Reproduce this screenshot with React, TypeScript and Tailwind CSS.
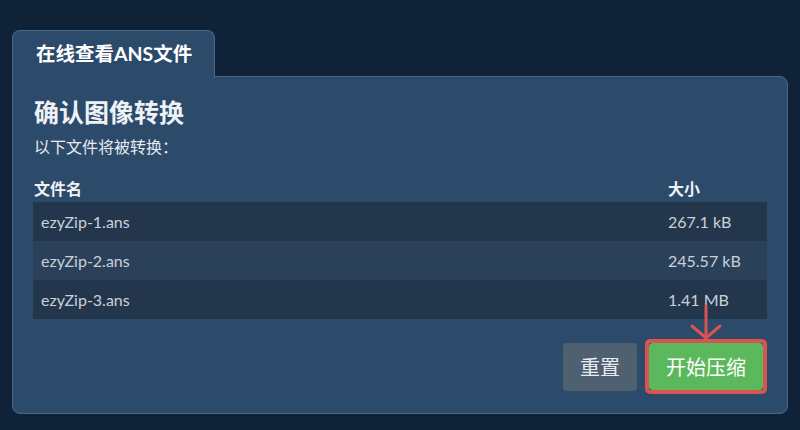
import { useState } from 'react'

const files = [
  { name: 'ezyZip-1.ans', size: '267.1 kB' },
  { name: 'ezyZip-2.ans', size: '245.57 kB' },
  { name: 'ezyZip-3.ans', size: '1.41 MB' },
]

const font = 'font-["Lato","Noto_Sans_CJK_SC",sans-serif]'

export default function App() {
  const [started, setStarted] = useState(false)

  return (
    <div className={`min-h-[430px] w-[800px] bg-[#0f2238] px-3 pt-[30px] ${font}`}>
      {/* tab */}
      <div className="relative z-10 -mb-px flex h-[47px] w-[203px] items-center rounded-t-lg border border-b-0 border-[#4a6688] bg-[#2c4a6a] pl-[23px] text-[19.5px] font-bold text-white">
        在线查看ANS文件
      </div>

      {/* panel */}
      <div className="rounded-tr-lg rounded-b-lg border border-[#4a6688] bg-[#2c4a6a] px-5 pt-5 pb-[19px]">
        <h1 className="pl-px text-[25px] leading-[31px] font-bold text-[#eef2f6]">确认图像转换</h1>
        <p className="mt-[7px] pl-px text-[16px] leading-6 text-[#e6ebf0]">以下文件将被转换：</p>

        <div className="mt-[18px] text-[16px]">
          <div className="flex leading-6 font-bold text-[#eef2f6]">
            <div className="flex-1 pl-px">文件名</div>
            <div className="w-[99px]">大小</div>
          </div>
          <div className="mt-px">
            {files.map((f, i) => (
              <div
                key={f.name}
                className={`flex h-[39px] items-center text-[#c9d1db] ${i % 2 === 1 ? 'bg-[#2b4159]' : 'bg-[#24364c]'}`}
              >
                <div className="flex-1 pl-2">{f.name}</div>
                <div className="w-[99px]">{f.size}</div>
              </div>
            ))}
          </div>
        </div>

        <div className="mt-5 flex items-center justify-end gap-2">
          <button className="h-12 w-[74px] rounded bg-[#4f6070] text-[20px] text-[#e8ecf0]">重置</button>
          <div className="relative rounded-[5px] border-4 border-[#d9534f]">
            <svg
              className="absolute left-[41px] top-[-39px]"
              width="32"
              height="38"
              viewBox="0 0 32 38"
              fill="none"
              stroke="#d9534f"
              strokeWidth="3"
              strokeLinecap="round"
            >
              <path d="M16 2 V34" />
              <path d="M2 22 L16 34 L30 22" />
            </svg>
            <button
              onClick={() => setStarted(!started)}
              className="h-[47px] w-[114px] rounded-sm bg-[#5cb85c] text-[20px] text-white"
            >
              开始压缩
            </button>
          </div>
        </div>
      </div>
    </div>
  )
}
